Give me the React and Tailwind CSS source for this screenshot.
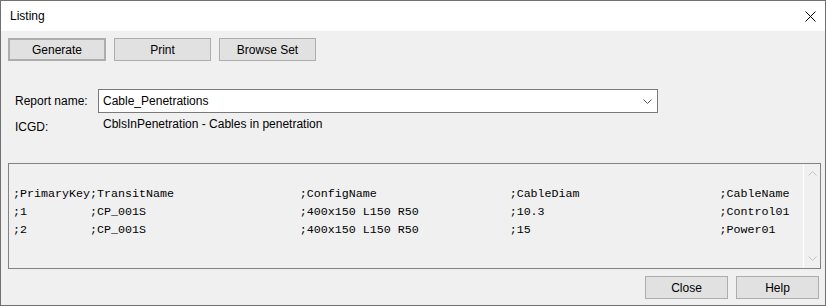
import React from "react";

const cols = [11, 30, 30, 30];
function line(cells) {
  return cells.map((c, i) => (i < cols.length ? c.padEnd(cols[i], " ") : c)).join("");
}
const rows = [
  [";PrimaryKey", ";TransitName", ";ConfigName", ";CableDiam", ";CableName"],
  [";1", ";CP_001S", ";400x150 L150 R50", ";10.3", ";Control01"],
  [";2", ";CP_001S", ";400x150 L150 R50", ";15", ";Power01"],
];

function Btn({ children, className = "" }) {
  return (
    <div
      className={
        "flex items-center justify-center h-[23px] bg-[#e1e1e1] border border-[#adadad] text-[12px] text-black " +
        className
      }
    >
      {children}
    </div>
  );
}

export default function App() {
  return (
    <div
      className="w-[826px] h-[306px] border border-[#707070] bg-[#f0f0f0] flex flex-col overflow-hidden"
      style={{ fontFamily: '"Liberation Sans", Arial, sans-serif' }}
    >
      <div className="h-[30px] bg-white flex items-center justify-between pl-[9px] pr-[9px] shrink-0">
        <span className="text-[12px] text-black">Listing</span>
        <svg width="11" height="11" viewBox="0 0 11 11">
          <path d="M0.5 0.5 L10.5 10.5 M10.5 0.5 L0.5 10.5" stroke="#000" strokeWidth="1" />
        </svg>
      </div>

      <div className="flex gap-[8px] pl-[7px] mt-[7px]">
        <Btn className="w-[98px] border-2 border-[#0078d7]">Generate</Btn>
        <Btn className="w-[97px]">Print</Btn>
        <Btn className="w-[97px]">Browse Set</Btn>
      </div>

      <div className="flex items-center mt-[28px] h-[24px]">
        <span className="w-[97px] pl-[14px] text-[12px] text-black">Report name:</span>
        <div className="w-[560px] h-[24px] bg-white border border-[#7a7a7a] flex items-center justify-between pl-[4px] pr-[5px]">
          <span className="text-[12px] text-black">Cable_Penetrations</span>
          <svg width="9" height="5" viewBox="0 0 9 5">
            <path d="M0.5 0.5 L4.5 4.5 L8.5 0.5" stroke="#555" strokeWidth="1" fill="none" />
          </svg>
        </div>
      </div>

      <div className="flex mt-[2px] h-[20px]">
        <span className="w-[102px] pl-[14px] pt-[3px] text-[12px] text-black">ICGD:</span>
        <span className="text-[12px] text-black">CblsInPenetration - Cables in penetration</span>
      </div>

      <div className="ml-[7px] mt-[28px] w-[813px] h-[106px] border border-[#828282] flex shrink-0">
        <div
          className="flex-1 pl-[4px] pt-[21px] text-[11.67px] leading-[18px] text-black whitespace-pre overflow-hidden"
          style={{ fontFamily: '"Liberation Mono", "Courier New", monospace' }}
        >
          {rows.map((r, i) => (
            <div key={i}>{line(r)}</div>
          ))}
        </div>
        <div className="w-[17px] border-l border-white flex flex-col justify-between items-center py-[7px]">
          <svg width="9" height="5" viewBox="0 0 9 5">
            <path d="M0.5 4.5 L4.5 0.5 L8.5 4.5" stroke="#c2c2c2" strokeWidth="1" fill="none" />
          </svg>
          <svg width="9" height="5" viewBox="0 0 9 5">
            <path d="M0.5 0.5 L4.5 4.5 L8.5 0.5" stroke="#c2c2c2" strokeWidth="1" fill="none" />
          </svg>
        </div>
      </div>

      <div className="flex justify-end gap-[8px] pr-[6px] mt-[7px]">
        <Btn className="w-[83px] h-[22px]">Close</Btn>
        <Btn className="w-[83px] h-[22px]">Help</Btn>
      </div>
    </div>
  );
}
